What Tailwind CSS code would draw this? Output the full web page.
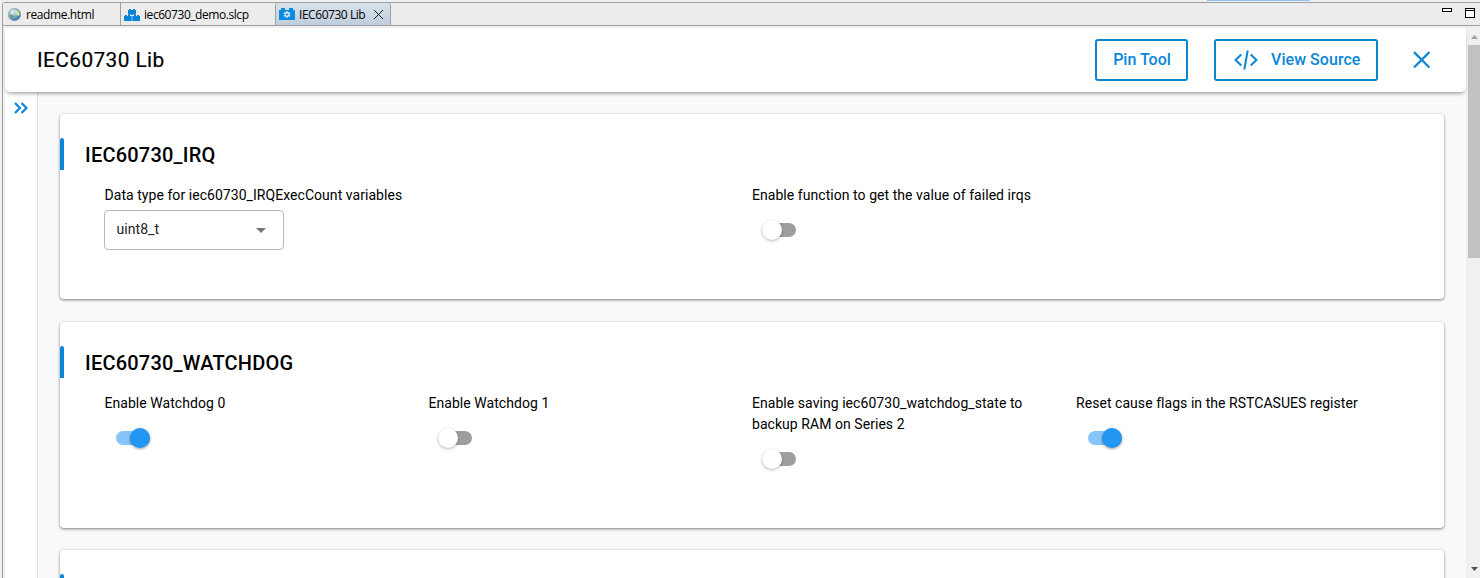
<!DOCTYPE html>
<html lang="en">
<head>
<meta charset="utf-8">
<title>IEC60730 Lib</title>
<script src="https://cdn.jsdelivr.net/npm/@tailwindcss/browser@4"></script>
</head>
<body class="h-[578px] w-[1480px] overflow-hidden bg-[#f0f0f0] font-['Roboto','Liberation_Sans',sans-serif] text-black">
<div class="flex h-full flex-col">
  <div class="flex h-[2px] pl-[1207px]"><div class="h-px w-[103px] bg-[#91c3ef]"></div></div>
  <div class="flex min-h-0 flex-1 flex-col rounded-tl-[3px] border-t border-l border-[#a0a0a0] ml-[2px]">
    <!-- Editor tabs -->
    <div class="flex h-[23px] shrink-0 border-b border-[#a0a0a0] bg-[#ececec] font-['Open_Sans','Noto_Sans',sans-serif] text-[12px] leading-[22px]">
      <div class="flex w-[118px] items-center border-r border-[#a0a0a0] pt-px pl-[5px]">
        <svg class="mr-[5px] h-[13px] w-[13px] shrink-0" viewBox="0 0 13 13">
          <defs><radialGradient id="globe" cx=".35" cy=".3" r=".75"><stop offset="0" stop-color="#e9f5f8"/><stop offset=".45" stop-color="#8bb7cf"/><stop offset="1" stop-color="#2f6ba4"/></radialGradient></defs>
          <circle cx="6.5" cy="6.5" r="6.2" fill="url(#globe)" stroke="#7d98aa" stroke-width=".5"/>
          <path d="M7 2.200l3 .5 1.800 3-1.500 2.300-2.300-1.500-1.500-1.500z" fill="#d5dda4"/><path d="M2 6.500l2.500.5 1.500 1.500-1 2-1.500-.8-1.300-1.800z" fill="#719b5b"/>
        </svg>
        <span class="whitespace-nowrap tracking-[-0.4px]">readme.html</span>
      </div>
      <div class="flex w-[154px] items-center pt-px pl-[3px]">
        <svg class="mr-[4px] h-[12px] w-[16px] shrink-0" viewBox="0 0 16 12" fill="#0a84d8">
          <path d="M4 1h1V0h2v1h2V0h2v1h1v4.700H4zM0 7h1V6h2v1h1V6h2v1h1.700v5H0zM8.300 7H10V6h2v1h1V6h2v1h1v5H8.300z"/>
        </svg>
        <span class="whitespace-nowrap tracking-[-0.44px]">iec60730_demo.slcp</span>
      </div>
      <div class="flex w-[116px] items-center rounded-t-[3px] border-x border-[#a0a0a0] bg-linear-to-b from-[#d9e2eb] to-[#bfcddc] pl-[3px]">
        <svg class="mr-[4px] h-[12px] w-[16px] shrink-0" viewBox="0 0 16 12">
          <path d="M0 2h2V0h4v2h4V0h4v2h2v10H0z" fill="#0a8ae0"/>
          <path d="M8 3v7M5 4.750l6 3.500M5 8.250l6-3.500" stroke="#d2e5f4" stroke-width="1.500"/>
          <circle cx="8" cy="6.500" r="2.400" fill="#d2e5f4"/><circle cx="8" cy="6.500" r="1.100" fill="#0a8ae0"/>
        </svg>
        <span class="w-[75px] pt-px whitespace-nowrap tracking-[-0.45px]">IEC60730 Lib</span>
        <svg class="mt-px h-[9px] w-[9px] shrink-0" viewBox="0 0 9 9" stroke="#222" stroke-width="1"><path d="M0 0l9 9M9 0L0 9"/></svg>
      </div>
      <div class="flex flex-1 justify-end gap-[13px] pt-[5px] pr-[5px]">
        <div class="h-[4px] w-[10px] border border-black bg-white"></div>
        <div class="h-[10px] w-[10px] border border-black bg-white"><div class="mt-px h-px bg-black"></div></div>
      </div>
    </div>
    <div class="flex min-h-0 flex-1 pt-[2px] pl-[2px]">
      <div class="flex w-[1461px] shrink-0 flex-col bg-[#f9f9f9]">
        <!-- Page header -->
        <header class="z-10 flex h-[64px] shrink-0 items-center rounded-b-[5px] bg-white pr-[36px] pl-[32px] shadow-[0_3px_4px_-2px_rgba(0,0,0,0.45)]">
          <h1 class="flex-1 text-[20.8px] leading-[30px] font-normal tracking-[0.42px] [-webkit-text-stroke:0.2px_black]">IEC60730 Lib</h1>
          <button class="mr-[26px] h-[42px] w-[93px] rounded-[3px] border-2 border-[#0a84d0] pl-px text-[16px] font-medium text-[#0a86d8]">Pin Tool</button>
          <button class="mr-[34px] flex h-[42px] w-[164px] items-center rounded-[3px] border-2 border-[#0a84d0] pl-[18px] text-[16px] font-medium text-[#0a86d8]">
            <svg class="mr-[13px] h-[20px] w-[24px]" viewBox="0 0 24 20" fill="none" stroke="#0a86d8" stroke-width="2"><path d="M7.300 4.500L1.500 10l5.800 5.500M16.700 4.500l5.800 5.500-5.800 5.500M13.700.5l-3.400 19"/></svg>
            <span class="whitespace-nowrap tracking-[0.05px]">View Source</span>
          </button>
          <svg class="h-[18px] w-[18px] overflow-visible" viewBox="0 0 18 18" stroke="#0a86d8" stroke-width="2.200"><path d="M2 1.100l15.400 15.400M17.400 1.100L2 16.500"/></svg>
        </header>
        <div class="flex min-h-0 flex-1">
          <aside class="w-[33px] shrink-0 border-r border-[#e0e0e0] bg-white pt-[10px] pl-[9px]">
            <svg class="h-[12px] w-[14px]" viewBox="0 0 14 12" fill="none" stroke="#0a86d8" stroke-width="2.200"><path d="M1 1l5 5-5 5M7.500 1l5 5-5 5"/></svg>
          </aside>
          <main class="flex flex-1 flex-col gap-[22px] overflow-hidden pt-[22px] pr-[22px] pl-[22px]">
            <section class="h-[185px] shrink-0 rounded-[4px] bg-white pt-[24px] shadow-[0_1px_3px_rgba(0,0,0,0.5)]">
              <div class="flex h-[32px] items-center"><div class="h-[32px] w-[4px] rounded-t-[2px] bg-[#0a86d8]"></div><h2 class="pt-[2px] pl-[21px] text-[20px] leading-[32px] font-medium tracking-[0.22px]">IEC60730_IRQ</h2></div>
              <div class="grid grid-cols-[324px_324px_324px_324px] pt-[15px] pl-[44px] text-[14px] leading-[21px]">
                <div class="col-span-2">
                  <div class="pl-[0.5px] tracking-[0.05px]">Data type for iec60730_IRQExecCount variables</div>
                  <div class="mt-[4px] flex h-[40px] w-[180px] items-center justify-between rounded-[4px] border border-[#b8b8b8] pr-[17.5px] pb-[2px] pl-[11.5px] tracking-[0.05px] text-[#222]">uint8_t<svg class="mt-[3px] h-[5px] w-[10px]" viewBox="0 0 10 5"><path d="M0 0h10L5 5z" fill="#757575"/></svg></div>
                </div>
                <div class="col-span-2">
                  <div class="tracking-[0.05px]">Enable function to get the value of failed irqs</div>
                  <div class="mt-[14px] ml-[10px] flex h-[20px] w-[34px] items-center"><div class="flex h-[14px] w-[34px] items-center rounded-full bg-[#9e9e9e]"><div class="h-[20px] w-[20px] rounded-full bg-white shadow-[0_1px_3px_rgba(0,0,0,0.3)]"></div></div></div>
                </div>
              </div>
            </section>
            <section class="mt-px h-[206px] shrink-0 rounded-[4px] bg-white pt-[24px] shadow-[0_1px_3px_rgba(0,0,0,0.5)]">
              <div class="flex h-[32px] items-center"><div class="h-[32px] w-[4px] rounded-t-[2px] bg-[#0a86d8]"></div><h2 class="pt-[2px] pl-[21px] text-[20px] leading-[32px] font-medium tracking-[0.22px]">IEC60730_WATCHDOG</h2></div>
              <div class="grid grid-cols-[324px_324px_324px_324px] pt-[15px] pl-[44px] text-[14px] leading-[21px] tracking-[0.05px]">
                <div>
                  <div class="pl-[0.5px]">Enable Watchdog 0</div>
                  <div class="mt-[14px] ml-[12px] flex h-[20px] w-[34px] items-center"><div class="flex h-[14px] w-[34px] items-center justify-end rounded-full bg-[#86c4f9]"><div class="h-[20px] w-[20px] rounded-full bg-[#2196f3] shadow-[0_1px_3px_rgba(0,0,0,0.4)]"></div></div></div>
                </div>
                <div>
                  <div class="pl-[0.5px]">Enable Watchdog 1</div>
                  <div class="mt-[14px] ml-[10px] flex h-[20px] w-[34px] items-center"><div class="flex h-[14px] w-[34px] items-center rounded-full bg-[#9e9e9e]"><div class="h-[20px] w-[20px] rounded-full bg-white shadow-[0_1px_3px_rgba(0,0,0,0.3)]"></div></div></div>
                </div>
                <div>
                  <div>Enable saving iec60730_watchdog_state to<br>backup RAM on Series 2</div>
                  <div class="mt-[14px] ml-[10px] flex h-[20px] w-[34px] items-center"><div class="flex h-[14px] w-[34px] items-center rounded-full bg-[#9e9e9e]"><div class="h-[20px] w-[20px] rounded-full bg-white shadow-[0_1px_3px_rgba(0,0,0,0.3)]"></div></div></div>
                </div>
                <div>
                  <div>Reset cause flags in the RSTCASUES register</div>
                  <div class="mt-[14px] ml-[12px] flex h-[20px] w-[34px] items-center"><div class="flex h-[14px] w-[34px] items-center justify-end rounded-full bg-[#86c4f9]"><div class="h-[20px] w-[20px] rounded-full bg-[#2196f3] shadow-[0_1px_3px_rgba(0,0,0,0.4)]"></div></div></div>
                </div>
              </div>
            </section>
            <section class="h-[185px] shrink-0 rounded-[4px] bg-white pt-[24px] shadow-[0_1px_3px_rgba(0,0,0,0.5)]">
              <div class="h-[32px] w-[4px] rounded-t-[2px] bg-[#0a86d8]"></div>
            </section>
          </main>
        </div>
      </div>
      <!-- Scrollbar -->
      <div class="flex w-[14px] shrink-0 flex-col bg-[#f0f0f0] pl-[2px]">
        <svg class="mt-[7px] ml-[3px] h-[4px] w-[7px]" viewBox="0 0 7 4"><path d="M3.500 0L7 4H0z" fill="#a0a0a0"/></svg>
        <div class="mt-[6px] h-[213px] w-[12px] bg-[#c1c1c1]"></div>
        <svg class="mt-auto mb-[7px] ml-[3px] h-[4px] w-[7px]" viewBox="0 0 7 4"><path d="M0 0h7L3.500 4z" fill="#505050"/></svg>
      </div>
    </div>
  </div>
</div>
</body>
</html>
